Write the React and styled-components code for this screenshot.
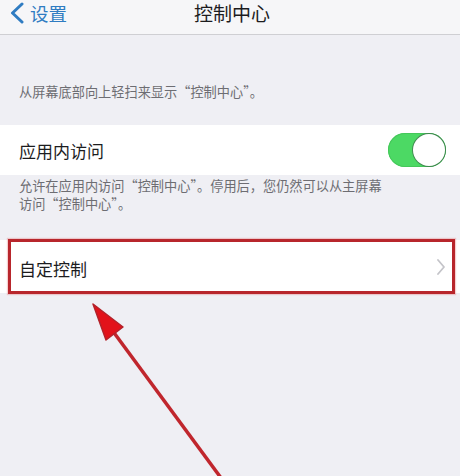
import React from "react";
import styled, { createGlobalStyle } from "styled-components";

const Global = createGlobalStyle`
  html, body { margin: 0; padding: 0; }
  body {
    background: #efeff4;
    font-family: "Noto Sans CJK SC", "Noto Sans", sans-serif;
    width: 460px;
    height: 476px;
    overflow: hidden;
  }
`;

const Page = styled.div`
  position: relative;
  width: 460px;
  height: 476px;
  background: #efeff4;
  overflow: hidden;
`;

const NavBar = styled.div`
  height: 34px;
  background: #f6f6f8;
  border-bottom: 1px solid #cfcfd3;
  display: flex;
  align-items: flex-start;
  position: relative;
`;

const Back = styled.div`
  display: flex;
  align-items: center;
  gap: 5px;
  padding-left: 9px;
  height: 26px;
  color: #2f7cc2;
  font-size: 18.5px;
  line-height: 26px;
`;

const Title = styled.div`
  position: absolute;
  left: 0;
  right: 0;
  top: 0;
  text-align: center;
  font-size: 19px;
  line-height: 25px;
  color: #1c1c1e;
  padding-left: 4px;
`;

const Note = styled.div`
  padding: ${(p) => p.$top}px 19px 0 19px;
  font-size: 13.2px;
  line-height: 18px;
  color: #6d6d72;
`;

const Cell = styled.div`
  background: #ffffff;
  height: ${(p) => p.$h}px;
  margin-top: ${(p) => p.$mt}px;
  display: flex;
  align-items: center;
  justify-content: space-between;
  padding: 0 14px 0 19px;
  position: relative;
`;

const Label = styled.div`
  font-size: 17px;
  color: #1c1c1e;
  padding-top: ${(p) => p.$pt || 0}px;
`;

const Toggle = styled.div`
  width: 58px;
  height: 34px;
  border-radius: 17px;
  background: #4cd964;
  box-shadow: inset 0 0 0 1px #45c75a;
  position: relative;
`;

const Knob = styled.div`
  position: absolute;
  right: 1px;
  top: 1px;
  width: 32px;
  height: 32px;
  border-radius: 50%;
  background: #fff;
  box-shadow: 0 0 0 1px rgba(60, 90, 70, 0.6);
`;

const Frame = styled.div`
  position: absolute;
  left: 8px;
  right: 5px;
  top: -1px;
  bottom: -1px;
  border: 3px solid #b8262c;
  box-shadow: 0 0 1px 1px rgba(230, 120, 120, 0.35);
  pointer-events: none;
`;

const Overlay = styled.svg`
  position: absolute;
  left: 0;
  top: 0;
  pointer-events: none;
`;

export default function App() {
  return (
    <>
      <Global />
      <Page>
        <NavBar>
          <Back>
            <svg width="16" height="22" viewBox="0 0 16 22">
              <polyline
                points="13,2 3.5,11 13,20"
                fill="none"
                stroke="#2f7cc2"
                strokeWidth="3"
                strokeLinecap="round"
                strokeLinejoin="round"
              />
            </svg>
            <span>设置</span>
          </Back>
          <Title>控制中心</Title>
        </NavBar>
        <Note $top={48}>从屏幕底部向上轻扫来显示“控制中心”。</Note>
        <Cell $h={50} $mt={24}>
          <Label>应用内访问</Label>
          <Toggle>
            <Knob />
          </Toggle>
        </Cell>
        <Note $top={2}>
          允许在应用内访问“控制中心”。停用后，您仍然可以从主屏幕
          <br />
          访问“控制中心”。
        </Note>
        <Cell $h={53} $mt={27}>
          <Label $pt={4}>自定控制</Label>
          <svg width="10" height="16" viewBox="0 0 10 16">
            <polyline
              points="2,1 8,8 2,15"
              fill="none"
              stroke="#c4c4c9"
              strokeWidth="1.8"
              strokeLinecap="round"
              strokeLinejoin="round"
            />
          </svg>
          <Frame />
        </Cell>
        <Overlay width="460" height="476" viewBox="0 0 460 476">
          <line
            x1="112"
            y1="330"
            x2="224"
            y2="482"
            stroke="#c0262d"
            strokeWidth="3.5"
          />
          <polygon
            points="93,304 106,340 123,327"
            fill="#e2121a"
            stroke="#b3222a"
            strokeWidth="1.5"
            strokeLinejoin="round"
          />
        </Overlay>
      </Page>
    </>
  );
}
